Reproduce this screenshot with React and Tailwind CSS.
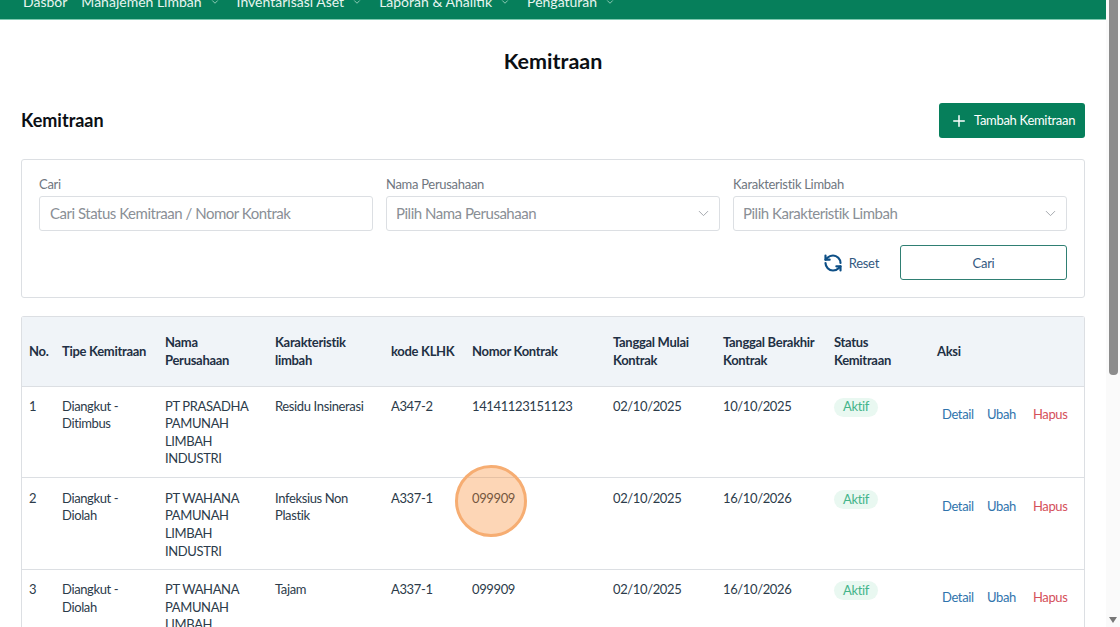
import React from "react";
import { ChevronDown, Plus, RefreshCcw } from "lucide-react";

const navItems = [
  { label: "Dasbor", className: "mr-[14px]" },
  { label: "Manajemen Limbah", chevron: true },
  { label: "Inventarisasi Aset", chevron: true },
  { label: "Laporan & Analitik", chevron: true },
  { label: "Pengaturan", chevron: true },
];

const rows = [
  {
    no: 1,
    tipe: "Diangkut - Ditimbus",
    nama: "PT PRASADHA PAMUNAH LIMBAH INDUSTRI",
    karakter: "Residu Insinerasi",
    kode: "A347-2",
    kontrak: "14141123151123",
    mulai: "02/10/2025",
    akhir: "10/10/2025",
  },
  {
    no: 2,
    tipe: "Diangkut - Diolah",
    nama: "PT WAHANA PAMUNAH LIMBAH INDUSTRI",
    karakter: "Infeksius Non Plastik",
    kode: "A337-1",
    kontrak: "099909",
    mulai: "02/10/2025",
    akhir: "16/10/2026",
  },
  {
    no: 3,
    tipe: "Diangkut - Diolah",
    nama: "PT WAHANA PAMUNAH LIMBAH INDUSTRI",
    karakter: "Tajam",
    kode: "A337-1",
    kontrak: "099909",
    mulai: "02/10/2025",
    akhir: "16/10/2026",
  },
];

const headers = [
  "No.",
  "Tipe Kemitraan",
  "Nama Perusahaan",
  "Karakteristik limbah",
  "kode KLHK",
  "Nomor Kontrak",
  "Tanggal Mulai Kontrak",
  "Tanggal Berakhir Kontrak",
  "Status Kemitraan",
  "Aksi",
];

const colWidths = [
  "w-[33px]",
  "w-[103px]",
  "w-[110px]",
  "w-[116px]",
  "w-[81px]",
  "w-[141px]",
  "w-[110px]",
  "w-[111px]",
  "w-[103px]",
  "w-[154px]",
];

const Select = ({ label, placeholder }) => (
  <div className="flex flex-col">
    <label className="text-[13px] tracking-[-0.3px] leading-[18px] text-[#6f7680] mb-[3px]">{label}</label>
    <div className="h-[35px] border border-[#dcdfe3] rounded-[3px] flex items-center justify-between pl-[9px] pr-[7px] text-[15px] tracking-[-0.48px] text-[#8a8f96]">
      <span>{placeholder}</span>
      <ChevronDown size={17} strokeWidth={1.4} className="text-[#a4a8ad]" />
    </div>
  </div>
);

export default function App() {
  return (
    <div className="relative h-[627px] w-[1120px] overflow-hidden flex bg-white font-['Lato',sans-serif] text-[#1f2d3d]">
      <div className="w-[1106px] shrink-0">
        {/* Top nav */}
        <nav className="h-[20px] overflow-hidden bg-[#067f5b] border-b border-[#7fc9b0] flex items-end pl-[23px] pb-[9px] text-[14px] leading-[17px] text-[#e8f5f0]">
          {navItems.map((item) => (
            <div key={item.label} className={`flex items-center whitespace-nowrap ${item.className || ""}`}>
              <span>{item.label}</span>
              {item.chevron && (
                <ChevronDown size={10} strokeWidth={2} className="ml-[8px] mr-[17px] text-[#a9d8c8]" />
              )}
            </div>
          ))}
        </nav>

        <main className="pl-[21px] pr-[21px]">
          <h1 className="text-center text-[21.5px] leading-[28px] font-bold text-[#0b0f14] pt-[27px]">
            Kemitraan
          </h1>

          <div className="flex items-center justify-between mt-[28px]">
            <h2 className="text-[18px] font-bold leading-[24px] text-[#0b0f14] pb-[2px]">Kemitraan</h2>
            <button className="h-[35px] w-[146px] bg-[#067f5b] rounded-[3px] flex items-center pl-[11px] text-[13px] tracking-[-0.3px] text-white">
              <Plus size={18} strokeWidth={2} className="mr-[6px]" />
              <span className="pt-[1px]">Tambah Kemitraan</span>
            </button>
          </div>

          {/* Filter */}
          <section className="mt-[21px] h-[139px] border border-[#dcdfe3] rounded-[3px] pt-[15px] px-[17px]">
            <div className="grid grid-cols-3 gap-x-[13px]">
              <div className="flex flex-col">
                <label className="text-[13px] tracking-[-0.3px] leading-[18px] text-[#6f7680] mb-[3px]">Cari</label>
                <div className="h-[35px] border border-[#dcdfe3] rounded-[3px] flex items-center pl-[10px] text-[15px] tracking-[-0.48px] text-[#8a8f96]">
                  Cari Status Kemitraan / Nomor Kontrak
                </div>
              </div>
              <Select label="Nama Perusahaan" placeholder="Pilih Nama Perusahaan" />
              <Select label="Karakteristik Limbah" placeholder="Pilih Karakteristik Limbah" />
            </div>
            <div className="flex justify-end items-center mt-[14px]">
              <RefreshCcw size={20} strokeWidth={2.6} className="text-[#0d4f86]" />
              <span className="ml-[6px] mr-[21px] pt-[2px] text-[13px] tracking-[-0.3px] text-[#33597f]">Reset</span>
              <button className="h-[35px] w-[167px] border border-[#2f7f73] rounded-[3px] pt-[2px] text-[13px] tracking-[-0.3px] text-[#33597f]">
                Cari
              </button>
            </div>
          </section>

          {/* Table */}
          <div className="mt-[18px] border border-[#dcdfe3] border-b-0 rounded-t-[3px]">
            <table className="table-fixed w-full border-collapse text-[13px] tracking-[-0.37px] leading-[17.6px]">
              <colgroup>
                {colWidths.map((w, i) => (
                  <col key={i} className={w} />
                ))}
              </colgroup>
              <thead className="bg-[#f0f4f8]">
                <tr className="h-[69px] border-b border-[#dcdfe3]">
                  {headers.map((h) => (
                    <th key={h} className="pl-[7px] pr-[4px] pt-[1px] text-left font-bold tracking-[-0.3px] text-[#1f3044]">
                      {h}
                    </th>
                  ))}
                </tr>
              </thead>
              <tbody>
                {rows.map((row) => {
                  // row 2 sits a pixel lower in the picture
                  const cell = row.no === 2 ? "pt-[12px] pb-[9px]" : "pt-[11px] pb-[9px]";
                  return (
                    <tr key={row.no} className="border-b border-[#dcdfe3] align-top text-[#2c3b4a]">
                      <td className={`pl-[7px] ${cell}`}>{row.no}</td>
                      <td className={`pl-[7px] pr-[4px] ${cell}`}>{row.tipe}</td>
                      <td className={`pl-[7px] pr-[4px] ${cell}`}>{row.nama}</td>
                      <td className={`pl-[7px] pr-[4px] ${cell}`}>{row.karakter}</td>
                      <td className={`pl-[7px] ${cell}`}>{row.kode}</td>
                      <td className={`pl-[7px] ${cell}`}>{row.kontrak}</td>
                      <td className={`pl-[7px] ${cell}`}>{row.mulai}</td>
                      <td className={`pl-[7px] ${cell}`}>{row.akhir}</td>
                      <td className={`pl-[7px] ${cell}`}>
                        <span className="inline-flex h-[19px] w-[44px] items-center justify-center rounded-full bg-[#e9f8f1] text-[#43b48a]">
                          Aktif
                        </span>
                      </td>
                      <td className={`pl-[12px] ${row.no === 2 ? "pt-[20px]" : "pt-[19px]"}`}>
                        <div className="flex">
                          <span className="w-[45px] text-[#2f74ad]">Detail</span>
                          <span className="w-[46px] text-[#2f74ad]">Ubah</span>
                          <span className="text-[#d5505a]">Hapus</span>
                        </div>
                      </td>
                    </tr>
                  );
                })}
              </tbody>
            </table>
          </div>
        </main>
      </div>

      {/* Browser scrollbar */}
      <aside className="w-[14px] shrink-0 bg-[#fafafa] flex flex-col items-center justify-between pb-[4px]">
        <div className="w-[9px] h-[375px] bg-[#8c8c8c] rounded-b-[4px]" />
        <div className="w-0 h-0 border-l-[4px] border-r-[4px] border-t-[6px] border-l-transparent border-r-transparent border-t-[#777]" />
      </aside>

      {/* Click marker */}
      <div className="absolute left-[455px] top-[465px] w-[72px] h-[72px] rounded-full border-[3px] border-[#f6ad72] bg-[#f98a2f]/35" />
    </div>
  );
}
